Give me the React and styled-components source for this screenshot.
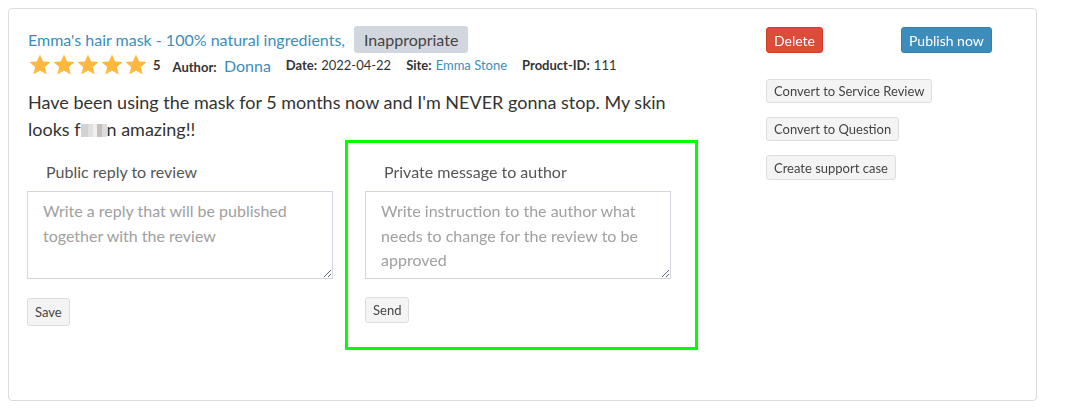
import React from 'react'
import styled, { createGlobalStyle } from 'styled-components'

const GlobalStyle = createGlobalStyle`
  body {
    margin: 8px;
    background: #ffffff;
    font-family: Lato, "Liberation Sans", sans-serif;
    color: #333333;
  }
`

const Card = styled.div`
  width: 1029px;
  height: 393px;
  box-sizing: border-box;
  border: 1px solid #dcdcdc;
  border-radius: 4px;
  padding: 17px 0 0 19px;
  display: flex;
`

const Main = styled.div`
  width: 740px;
`

const TitleRow = styled.div`
  display: flex;
  align-items: center;
  height: 28px;
  margin-top: -1px;
`

const Link = styled.a`
  color: #3c8dbc;
  text-decoration: none;
  font-size: ${props => props.size || 16}px;
`

const Badge = styled.span`
  background: #d2d6de;
  color: #444444;
  font-size: 16px;
  padding: 4px 10px;
  border-radius: 3px;
  margin-left: 9px;
  line-height: 19px;
`

const MetaRow = styled.div`
  display: flex;
  align-items: center;
  height: 24px;
  font-size: 13px;
`

const Stars = styled.span`
  display: flex;
  margin-right: 5px;
`

const Score = styled.b`
  margin-right: 12px;
`

const MetaItem = styled.span`
  margin-right: 15px;
  display: flex;
  align-items: baseline;
  b {
    margin-right: 4px;
  }
`

const Review = styled.p`
  font-size: 18px;
  line-height: 27px;
  margin: 12px 0 0 0;
  color: #333333;
`

const Blur = styled.span`
  display: inline-block;
  width: 26px;
  height: 13px;
  vertical-align: -1px;
  background: linear-gradient(90deg, #c8c8c8 0 25%, #d8d8d8 25% 45%, #ececec 45% 60%, #b8b0ac 60% 80%, #d4d4d4 80%);
  opacity: 0.8;
`

const Replies = styled.div`
  display: flex;
  align-items: flex-start;
  margin-top: -3px;
  margin-left: -1px;
`

const ReplyColumn = styled.div`
  width: ${props => props.width}px;
  box-sizing: border-box;
  padding: ${props => props.highlighted ? '19px 25px 24px 17px' : '22px 0 0 0'};
  border: ${props => props.highlighted ? '3px solid #00ff00' : 'none'};
  margin-left: ${props => props.highlighted ? '12px' : '0'};
`

const Label = styled.div`
  font-size: 16px;
  line-height: 20px;
  color: #555555;
  padding-left: 19px;
  margin-bottom: 9px;
`

const TextArea = styled.textarea`
  display: block;
  width: 306px;
  height: 88px;
  box-sizing: border-box;
  border: 1px solid #d2d6de;
  padding: 7px 15px;
  font-family: Lato, "Liberation Sans", sans-serif;
  font-size: 16px;
  line-height: 24.5px;
  color: #333333;
  resize: both;
  &::placeholder {
    color: #a0a0a0;
  }
`

const Button = styled.button`
  font-family: Lato, "Liberation Sans", sans-serif;
  font-size: ${props => props.size || 13}px;
  height: ${props => props.h || 26}px;
  padding: 0 7px;
  border-radius: 3px;
  cursor: pointer;
  background: ${props => props.bg || '#f4f4f4'};
  color: ${props => props.bg ? '#ffffff' : '#444444'};
  border: 1px solid ${props => props.border || '#dddddd'};
  white-space: nowrap;
`

const ActionButton = styled(Button)`
  margin-top: ${props => props.top}px;
`

const Side = styled.div`
  padding: 1px 0 0 9px;
  display: flex;
  flex-direction: column;
  align-items: flex-start;
`

const TopActions = styled.div`
  display: grid;
  grid-template-columns: 135px 135px;
  margin-bottom: 26px;
`

const Stack = styled.div`
  display: flex;
  flex-direction: column;
  align-items: flex-start;
  gap: 14px;
`

const Star = () => (
  <svg width="24" height="24" viewBox="0 0 24 24">
    <polygon
      points="12,1.5 15.1,8.4 22.6,9.1 16.9,14.1 18.6,21.5 12,17.6 5.4,21.5 7.1,14.1 1.4,9.1 8.9,8.4"
      fill="#ffb83d"
    />
  </svg>
)

export default function App() {
  return (
    <>
      <GlobalStyle />
      <Card>
        <Main>
          <TitleRow>
            <Link href="#">Emma's hair mask - 100% natural ingredients,</Link>
            <Badge>Inappropriate</Badge>
          </TitleRow>
          <MetaRow>
            <Stars>
              {[0, 1, 2, 3, 4].map(i => <Star key={i} />)}
            </Stars>
            <Score>5</Score>
            <MetaItem><b>Author:</b>&nbsp;<Link href="#">Donna</Link></MetaItem>
            <MetaItem><b>Date:</b>2022-04-22</MetaItem>
            <MetaItem><b>Site:</b><Link href="#" size={13}>Emma Stone</Link></MetaItem>
            <MetaItem><b>Product-ID:</b>111</MetaItem>
          </MetaRow>
          <Review>
            Have been using the mask for 5 months now and I'm NEVER gonna stop. My skin
            <br />
            looks f<Blur />n amazing!!
          </Review>
          <Replies>
            <ReplyColumn width={306}>
              <Label>Public reply to review</Label>
              <TextArea placeholder="Write a reply that will be published together with the review" />
              <ActionButton top={19} size={13} h={28}>Save</ActionButton>
            </ReplyColumn>
            <ReplyColumn width={353} highlighted>
              <Label>Private message to author</Label>
              <TextArea placeholder="Write instruction to the author what needs to change for the review to be approved" />
              <ActionButton top={18} size={13} h={26}>Send</ActionButton>
            </ReplyColumn>
          </Replies>
        </Main>
        <Side>
          <TopActions>
            <div><Button size={14} bg="#dd4b39" border="#d73925">Delete</Button></div>
            <div><Button size={14} bg="#3c8dbc" border="#367fa9">Publish now</Button></div>
          </TopActions>
          <Stack>
            <Button size={13} h={24}>Convert to Service Review</Button>
            <Button size={13} h={24}>Convert to Question</Button>
            <Button size={13} h={25}>Create support case</Button>
          </Stack>
        </Side>
      </Card>
    </>
  )
}
